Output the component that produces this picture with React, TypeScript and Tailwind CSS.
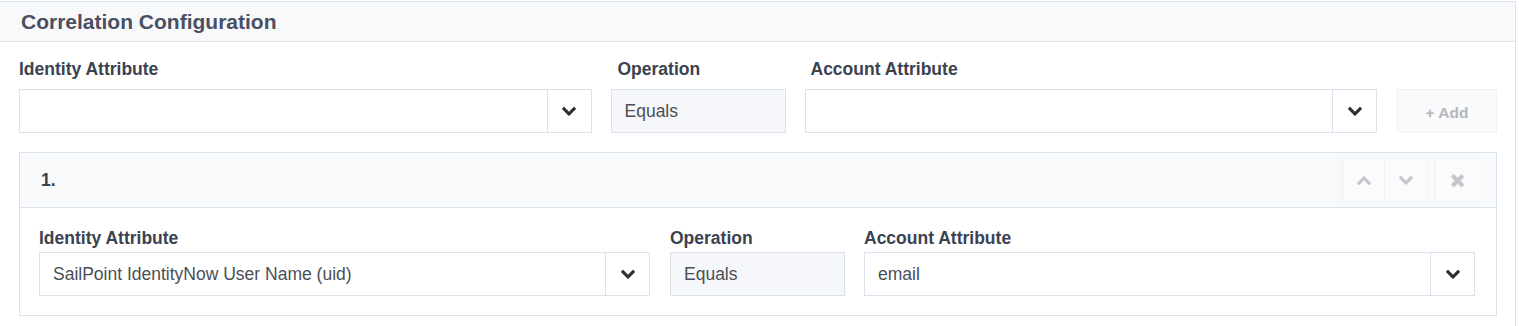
import React from 'react';

const font = { fontFamily: '"Liberation Sans", Arial, sans-serif' };

const ChevronDown: React.FC<{ className?: string; up?: boolean }> = ({ className, up }) => (
  <svg
    viewBox="90 552 1612 1016"
    width="14"
    height="9"
    className={className}
    style={up ? { transform: 'rotate(180deg)' } : undefined}
    fill="currentColor"
  >
    <path d="M1683 808l-742 741q-19 19-45 19t-45-19l-742-741q-19-19-19-45.5t19-45.5l166-165q19-19 45-19t45 19l531 531 531-531q19-19 45-19t45 19l166 165q19 19 19 45.5t-19 45.5z" />
  </svg>
);

const Times: React.FC<{ className?: string }> = ({ className }) => (
  <svg viewBox="186 240 1304 1314" width="14" height="14" className={className} fill="currentColor">
    <path d="M1490 1322q0 40-28 68l-136 136q-28 28-68 28t-68-28l-294-294-294 294q-28 28-68 28t-68-28l-136-136q-28-28-28-68t28-68l294-294-294-294q-28-28-28-68t28-68l136-136q28-28 68-28t68 28l294 294 294-294q28-28 68-28t68 28l136 136q28 28 28 68t-28 68l-294 294 294 294q28 28 28 68z" />
  </svg>
);

const Label: React.FC<{ children: React.ReactNode; className?: string }> = ({ children, className }) => (
  <div className={`text-[17.5px] leading-[22px] font-bold text-[#3b4250] ${className ?? ''}`}>{children}</div>
);

const Select: React.FC<{ value?: string }> = ({ value }) => (
  <div className="flex h-[44px] border border-[#dbe2ee] bg-white">
    <div className="flex-1 flex items-center px-[13px] text-[17.5px] text-[#4b4f56]">{value}</div>
    <div className="w-[44px] flex items-center justify-center border-l border-[#dbe2ee]">
      <ChevronDown className="text-[#2f2f2f]" />
    </div>
  </div>
);

const Operation: React.FC = () => (
  <div className="h-[44px] flex items-center px-[13px] border border-[#dbe2ee] bg-[#f5f7fa] text-[17.5px] text-[#4b4f56]">
    Equals
  </div>
);

const App: React.FC = () => {
  return (
    <div className="w-[1519px] h-[326px] bg-white pt-px overflow-hidden" style={font}>
      <div className="w-[1516px] border-t border-r border-[#dbe2ee] h-full">
        <div className="h-[40px] bg-[#f8f9fb] border-b border-[#dbe2ee] flex items-center pl-[21px]">
          <h2 className="text-[21px] font-bold text-[#4a5061]">Correlation Configuration</h2>
        </div>

        <div className="pl-[19px] pr-[18px] pt-[16px]">
          <div className="flex items-end">
            <div className="flex-1">
              <Label className="mb-[9px]">Identity Attribute</Label>
              <Select />
            </div>
            <div className="w-[175px] ml-[19px]">
              <Label className="mb-[9px] pl-[7px]">Operation</Label>
              <Operation />
            </div>
            <div className="flex-1 ml-[19px]">
              <Label className="mb-[9px] pl-[6px]">Account Attribute</Label>
              <Select />
            </div>
            <button className="w-[100px] h-[44px] ml-[20px] bg-[#f9fafb] border border-[#f0f2f5] text-[15.5px] font-bold text-[#b3b6ba] pt-[3px]">
              + Add
            </button>
          </div>

          <div className="mt-[19px] border border-[#dbe2ee]">
            <div className="h-[55px] bg-[#f8f9fb] border-b border-[#dbe2ee] flex items-center justify-between pl-[21px] pr-[18px]">
              <span className="text-[17.5px] font-bold text-[#3b4250]">1.</span>
              <div className="flex items-center">
                <div className="w-[43px] h-[44px] flex items-center justify-center bg-[#fafbfc] border border-[#eef0f4]">
                  <ChevronDown up className="text-[#c4c6c9]" />
                </div>
                <div className="w-[43px] h-[44px] flex items-center justify-center bg-[#fafbfc] border border-[#eef0f4] border-l-0">
                  <ChevronDown className="text-[#c4c6c9]" />
                </div>
                <div className="w-[43px] h-[44px] ml-[7px] flex items-center justify-center bg-[#fafbfc] border border-[#eef0f4] border-r-0">
                  <Times className="text-[#c4c6c9]" />
                </div>
              </div>
            </div>

            <div className="pl-[19px] pr-[21px] pt-[19px] pb-[19px] flex items-end">
              <div className="flex-1">
                <Label className="mb-[3px]">Identity Attribute</Label>
                <Select value="SailPoint IdentityNow User Name (uid)" />
              </div>
              <div className="w-[175px] ml-[20px]">
                <Label className="mb-[3px]">Operation</Label>
                <Operation />
              </div>
              <div className="flex-1 ml-[19px]">
                <Label className="mb-[3px]">Account Attribute</Label>
                <Select value="email" />
              </div>
            </div>
          </div>
        </div>
      </div>
    </div>
  );
};

export default App;
